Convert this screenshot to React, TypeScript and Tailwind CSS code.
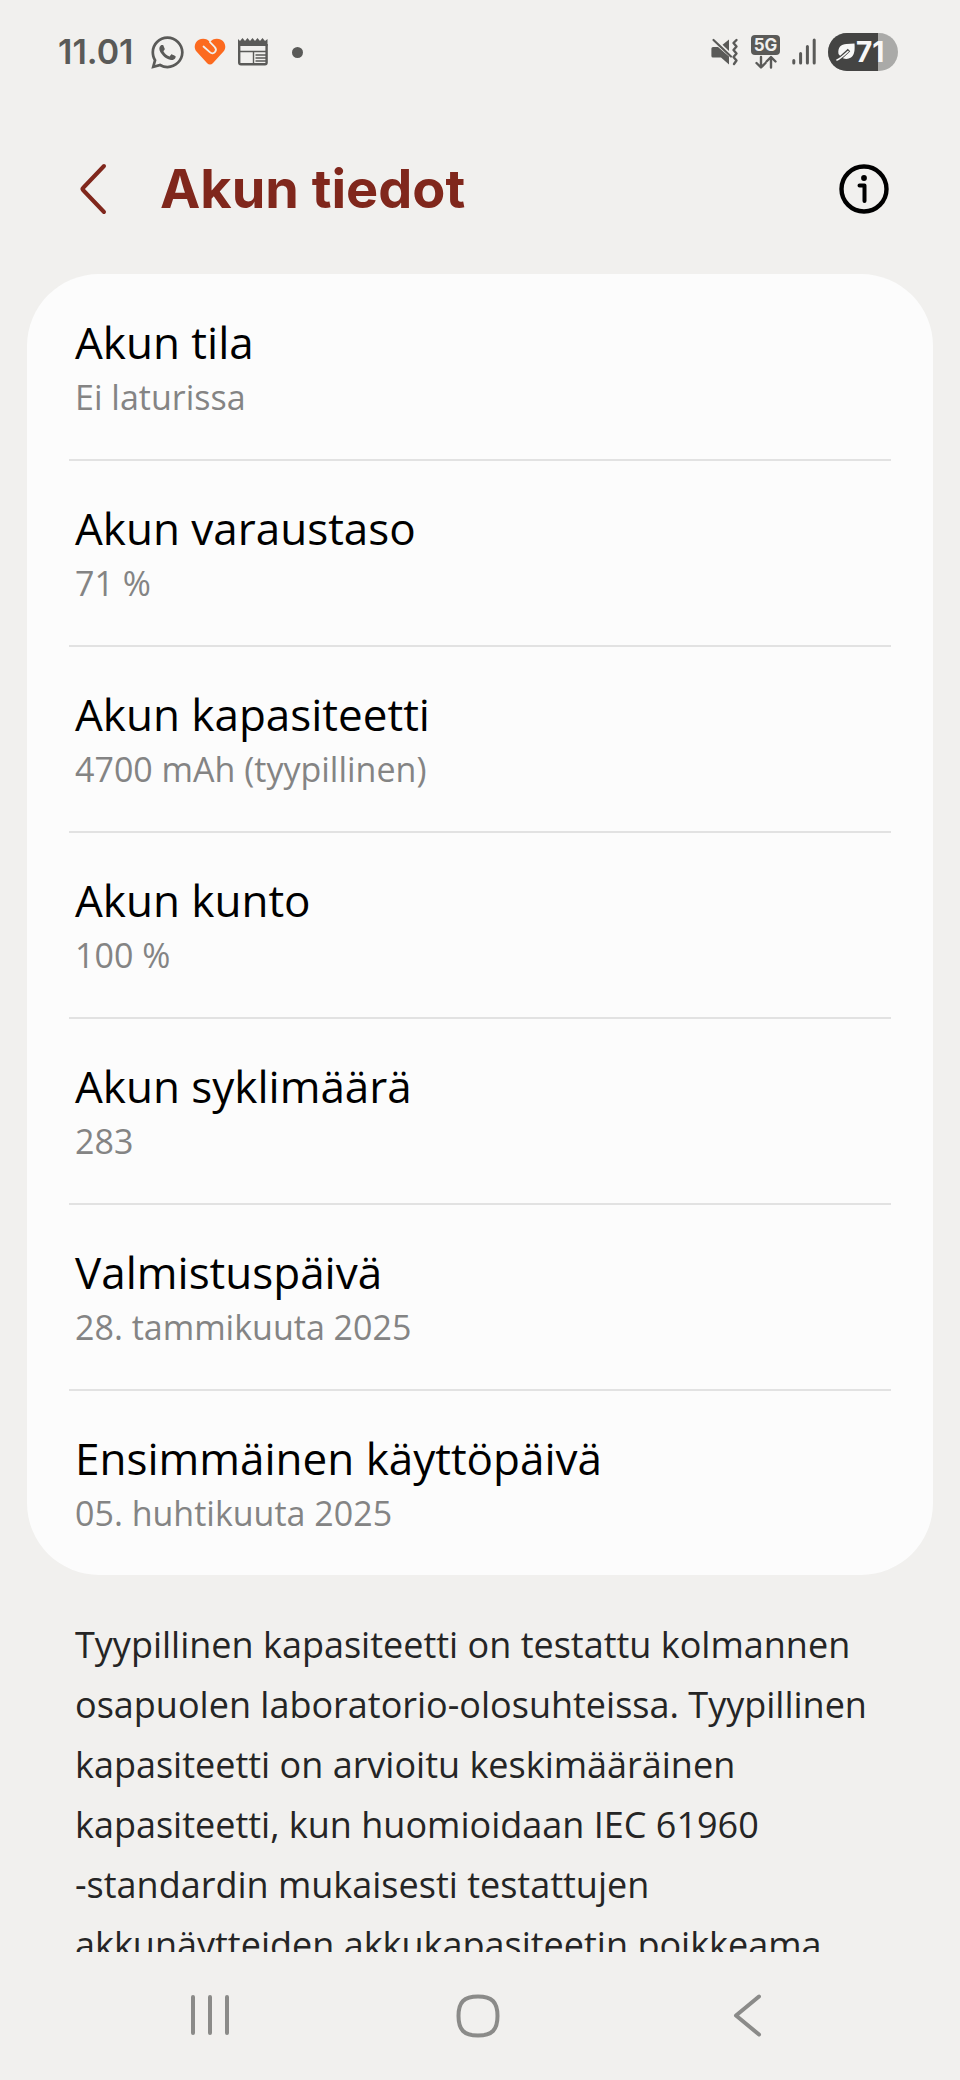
import { FaWhatsapp } from "react-icons/fa";

interface BatteryRow {
  label: string;
  value: string;
}

const ROWS: BatteryRow[] = [
  { label: "Akun tila", value: "Ei laturissa" },
  { label: "Akun varaustaso", value: "71 %" },
  { label: "Akun kapasiteetti", value: "4700 mAh (tyypillinen)" },
  { label: "Akun kunto", value: "100 %" },
  { label: "Akun syklimäärä", value: "283" },
  { label: "Valmistuspäivä", value: "28. tammikuuta 2025" },
  { label: "Ensimmäinen käyttöpäivä", value: "05. huhtikuuta 2025" },
];

const BATTERY_LEVEL = 71;

function HeartIcon() {
  return (
    <svg width="32" height="28" viewBox="0 0 32 28" fill="none" aria-hidden="true">
      <path
        d="M16 4.2C13.6.6 8.600-.2 4.900 1.800.4 4.400-.6 9.800 2.500 13.600L13.200 25.200C14.800 26.800 17.200 26.800 18.800 25.200L29.500 13.600C32.600 9.800 31.600 4.400 27.100 1.800 23.400-.2 18.400.6 16 4.200Z"
        fill="#fc6a1f"
      />
      <path
        d="M9.500 8.500L15.800 14.200C17.600 15.800 20 15.600 21.200 13.800C22.300 12.200 22 10.200 20.600 8.800L16 4.200"
        stroke="#f1f0ee"
        strokeWidth="1.800"
        strokeLinecap="round"
      />
    </svg>
  );
}

function NewsIcon() {
  return (
    <svg width="30" height="28" viewBox="0 0 30 28" fill="none" stroke="#5a5a58" aria-hidden="true">
      <path d="M0 8V1L2 3 4.500 0 7 3 9.500 0 12 3 14.500 0 17 3 19.500 0 22 3 24.500 0 27 3 29.500 1V8Z" fill="#5a5a58" stroke="none" />
      <path d="M1.200 6V24.500Q1.200 26.300 3 26.300H27Q28.600 26.300 28.600 24.500V6" strokeWidth="2.400" />
      <path d="M2 13.500H28M15.500 13.500V26" strokeWidth="1.400" />
      <path d="M17.500 17H28M17.500 20H28M17.500 23H28" strokeWidth="1.400" />
    </svg>
  );
}

function MuteVibrateIcon() {
  return (
    <svg width="28" height="28" viewBox="0 0 28 28" fill="none" aria-hidden="true">
      <path d="M2 9H7L18 18.500V26.500L10 19.500H2Q.4 19.500 .4 17.900V10.600Q.4 9 2 9Z" fill="#5a5a58" />
      <path d="M11.500 6.800L18 1.500V13Z" fill="#5a5a58" />
      <path d="M2.500 2L20 18.500" stroke="#5a5a58" strokeWidth="2.200" strokeLinecap="round" />
      <path
        d="M25.500 2L22.500 5 25.500 8.500 22.500 12 25.500 15.500 22.500 19 25.500 22.500 23 26"
        stroke="#5a5a58"
        strokeWidth="2.400"
        strokeLinecap="round"
        strokeLinejoin="round"
      />
    </svg>
  );
}

function NetworkIcon() {
  return (
    <div className="flex w-[29px] flex-col items-center">
      <span className="flex h-5 w-full items-center justify-center rounded bg-[#5a5a58] font-[Inter,sans-serif] text-[17px] leading-5 font-bold text-[#f1f0ee]">
        5G
      </span>
      <svg width="22" height="14" viewBox="0 0 22 14" fill="none" stroke="#5a5a58" strokeWidth="2.400" strokeLinecap="round" strokeLinejoin="round" aria-hidden="true">
        <path d="M6 2V12M1.500 8L6 12.500 10.500 8" />
        <path d="M16 12.500V2.500M11.500 6.500L16 2 20.500 6.500" />
      </svg>
    </div>
  );
}

function SignalIcon() {
  return (
    <svg width="24" height="28" viewBox="0 0 24 28" stroke="#5a5a58" strokeWidth="3" strokeLinecap="round" aria-hidden="true">
      <path d="M1.800 22.500V25M8.600 15.500V25M15.400 8.500V25M22.200 2V25" />
    </svg>
  );
}

function BatteryPill() {
  return (
    <div className="relative flex h-[38px] w-[70px] items-center overflow-hidden rounded-full bg-[#aaaaa8] pl-2">
      <div className="absolute inset-y-0 left-0 bg-[#444443]" style={{ width: `${BATTERY_LEVEL}%` }} />
      <svg className="relative" width="20" height="20" viewBox="0 0 20 20" fill="none" aria-hidden="true">
        <path d="M2.500 12C1.500 5.500 5 2 10.500 2L18.500 1.500C19 8 18.500 13 15 15.500C12 17.500 8 17.200 5.500 15.500Z" fill="#f7f7f7" />
        <path d="M1 18.500C5 16 7 13.500 13 8" stroke="#444443" strokeWidth="3.600" />
        <path d="M1 18C4 17 7 14 12 9.500" stroke="#f7f7f7" strokeWidth="1.600" strokeLinecap="round" />
      </svg>
      <span className="relative font-[Inter,sans-serif] text-[28px] leading-none font-bold text-[#f7f7f7]">{BATTERY_LEVEL}</span>
    </div>
  );
}

function StatusBar() {
  return (
    <div className="flex h-[104px] shrink-0 items-center justify-between pr-[62px] pl-[58px]">
      <div className="flex items-center">
        <time className="font-[Inter,sans-serif] text-[34px] leading-none font-semibold text-[#5a5a58]">11.01</time>
        <FaWhatsapp className="ml-4 size-[37px] text-[#5a5a58]" />
        <span className="ml-2 flex items-center gap-3">
          <HeartIcon />
          <NewsIcon />
        </span>
        <span className="ml-6 size-[11px] rounded-full bg-[#5a5a58]" />
      </div>
      <div className="flex items-center gap-3">
        <MuteVibrateIcon />
        <NetworkIcon />
        <SignalIcon />
        <BatteryPill />
      </div>
    </div>
  );
}

function NavBar() {
  return (
    <nav className="grid h-32 shrink-0 grid-cols-3 pr-20 pl-[76px] text-[#8b8b89]">
      <button type="button" aria-label="Viimeisimmät" className="flex items-center justify-center">
        <svg width="44" height="44" viewBox="0 0 44 44" stroke="currentColor" strokeWidth="4" strokeLinecap="round">
          <path d="M5 3V39M22 3V39M39 3V39" />
        </svg>
      </button>
      <button type="button" aria-label="Aloitus" className="flex items-center justify-center">
        <svg width="44" height="44" viewBox="0 0 44 44" fill="none" stroke="currentColor" strokeWidth="4">
          <path d="M22 2.500C36 2.500 41.500 8 41.500 22S36 41.500 22 41.500 2.500 36 2.500 22 8 2.500 22 2.500Z" />
        </svg>
      </button>
      <button type="button" aria-label="Takaisin" className="flex items-center justify-center">
        <svg width="44" height="44" viewBox="0 0 44 44" fill="none" stroke="currentColor" strokeWidth="4" strokeLinecap="round" strokeLinejoin="round">
          <path d="M35 2.500L12 21.500 35 40.500" />
        </svg>
      </button>
    </nav>
  );
}

export default function App() {
  return (
    <div className="flex h-screen flex-col bg-[#f1f0ee] font-['Open_Sans',sans-serif]">
      <StatusBar />

      <header className="flex h-[170px] shrink-0 items-center pr-[70px] pl-[77px]">
        <button type="button" aria-label="Siirry ylös" className="text-[#80271c]">
          <svg width="32" height="52" viewBox="0 0 32 52" fill="none" stroke="currentColor" strokeWidth="4" strokeLinecap="round" strokeLinejoin="round">
            <path d="M27 3L6 25Q5 26 6 27L27 49" />
          </svg>
        </button>
        <h1 className="ml-[51px] flex-1 font-[Inter,sans-serif] text-[54px] leading-none font-bold text-[#80271c]">Akun tiedot</h1>
        <button type="button" aria-label="Tietoja" className="text-black">
          <svg width="52" height="52" viewBox="0 0 52 52" fill="none" stroke="currentColor" aria-hidden="true">
            <circle cx="26" cy="26" r="22.500" strokeWidth="4.400" />
            <circle cx="26" cy="15" r="2.900" fill="currentColor" stroke="none" />
            <path d="M21.500 22.500H26.500V38" strokeWidth="4" strokeLinecap="round" strokeLinejoin="round" />
          </svg>
        </button>
      </header>

      <main className="min-h-0 flex-1 overflow-hidden px-[27px]">
        <dl className="rounded-[72px] bg-[#fcfcfc] px-[42px] pt-px">
          {ROWS.map((row) => (
            <div key={row.label} className="border-b-2 border-[#e2e2e2] px-1.5 pt-[37px] pb-[39px] last:border-b-0">
              <dt className="text-[44px] leading-[60px] text-black">{row.label}</dt>
              <dd className="mt-0.5 text-[34px] leading-[46px] text-[#848484]">{row.value}</dd>
            </div>
          ))}
        </dl>

        <p className="mt-10 px-12 text-[36px] leading-[60px] text-[#252525]">
          Tyypillinen kapasiteetti on testattu kolmannen osapuolen laboratorio-olosuhteissa. Tyypillinen kapasiteetti on
          arvioitu keskimääräinen kapasiteetti, kun huomioidaan IEC 61960{" "}
          <span className="whitespace-nowrap">-standardin</span> mukaisesti testattujen akkunäytteiden akkukapasiteetin
          poikkeama
        </p>
      </main>

      <NavBar />
    </div>
  );
}
